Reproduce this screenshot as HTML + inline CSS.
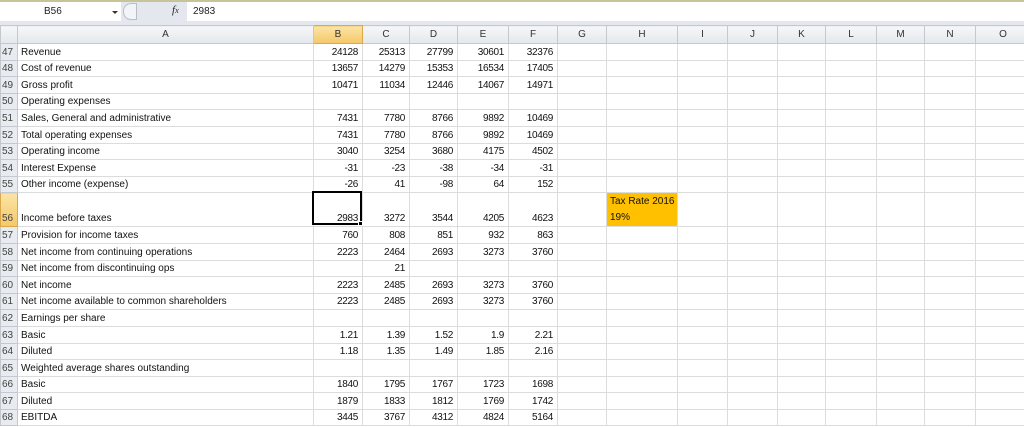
<!DOCTYPE html>
<html><head><meta charset="utf-8"><style>
*{margin:0;padding:0;box-sizing:border-box}
body{width:1024px;height:427px;overflow:hidden;background:#fff;font-family:"Liberation Sans",sans-serif;position:relative}
#fb{position:absolute;left:0;top:0;width:1024px;height:25px;background:#e4e8ee;border-top:2px solid #c8c49a}
#nb{position:absolute;left:0;top:2px;width:121px;height:19px;background:#fff;font-size:10px;line-height:19px;padding-left:44px;color:#222}
#arr{position:absolute;left:112px;top:11px;width:0;height:0;border-left:3px solid transparent;border-right:3px solid transparent;border-top:3px solid #333}
#btn{position:absolute;left:123px;top:3px;width:14px;height:17px;border:1px solid #b8bec8;border-radius:8px 0 0 8px;background:#f2f4f7}
#fx{position:absolute;left:172px;top:4px;font-family:"Liberation Serif",serif;font-style:italic;font-size:11px;color:#222}
#fi{position:absolute;left:187px;top:2px;width:837px;height:19px;background:#fff;font-size:10px;line-height:19px;padding-left:6px;color:#222}
table{position:absolute;left:0;top:25px;border-collapse:collapse;table-layout:fixed;width:1030px}
td{border:1px solid #dadcdd;font-size:10px;color:#111;white-space:nowrap;overflow:hidden;height:16.6px;line-height:14px;padding:0 3px;vertical-align:bottom}
tr.h td{background:linear-gradient(#f6f7f9,#e4e7eb);border-color:#c5c9cf;text-align:center;height:18px;color:#333;font-size:10px;vertical-align:middle}
td.r{background:#e8ebef;border-color:#c5c9cf;color:#444;padding:0 0 0 1px;font-size:10px}
td.n{text-align:right;font-family:"Liberation Sans Narrow","Liberation Sans",sans-serif;letter-spacing:-0.3px;padding-right:4px}
tr.h td.sel,td.r.sel{background:linear-gradient(#fbe4a6,#f5c869);border-color:#d9a94a}
tr.t td{height:32px}
td.tax{background:#ffc000;vertical-align:top;line-height:16px;padding-top:1px}
#selbox{position:absolute;left:312px;top:191px;width:50px;height:34px;border:2px solid #000}
#hdl{position:absolute;left:358px;top:221px;width:5px;height:5px;background:#000;border:1px solid #fff}
</style></head><body>
<div id="fb"></div>
<div id="nb">B56</div><div id="arr"></div><div id="btn"></div>
<div id="fx">f<span style="font-size:8px">x</span></div>
<div id="fi">2983</div>
<table>
<colgroup><col style="width:17px"><col style="width:296px"><col style="width:49px"><col style="width:47px"><col style="width:48px"><col style="width:51px"><col style="width:49px"><col style="width:49px"><col style="width:71px"><col style="width:50px"><col style="width:50px"><col style="width:48px"><col style="width:51px"><col style="width:48px"><col style="width:51px"><col style="width:55px"></colgroup>
<tr class="h"><td></td><td>A</td><td class="sel">B</td><td>C</td><td>D</td><td>E</td><td>F</td><td>G</td><td>H</td><td>I</td><td>J</td><td>K</td><td>L</td><td>M</td><td>N</td><td>O</td></tr>
<tr><td class="r">47</td><td>Revenue</td><td class="n">24128</td><td class="n">25313</td><td class="n">27799</td><td class="n">30601</td><td class="n">32376</td><td></td><td></td><td></td><td></td><td></td><td></td><td></td><td></td><td></td></tr>
<tr><td class="r">48</td><td>Cost of revenue</td><td class="n">13657</td><td class="n">14279</td><td class="n">15353</td><td class="n">16534</td><td class="n">17405</td><td></td><td></td><td></td><td></td><td></td><td></td><td></td><td></td><td></td></tr>
<tr><td class="r">49</td><td>Gross profit</td><td class="n">10471</td><td class="n">11034</td><td class="n">12446</td><td class="n">14067</td><td class="n">14971</td><td></td><td></td><td></td><td></td><td></td><td></td><td></td><td></td><td></td></tr>
<tr><td class="r">50</td><td>Operating expenses</td><td></td><td></td><td></td><td></td><td></td><td></td><td></td><td></td><td></td><td></td><td></td><td></td><td></td><td></td></tr>
<tr><td class="r">51</td><td>Sales, General and administrative</td><td class="n">7431</td><td class="n">7780</td><td class="n">8766</td><td class="n">9892</td><td class="n">10469</td><td></td><td></td><td></td><td></td><td></td><td></td><td></td><td></td><td></td></tr>
<tr><td class="r">52</td><td>Total operating expenses</td><td class="n">7431</td><td class="n">7780</td><td class="n">8766</td><td class="n">9892</td><td class="n">10469</td><td></td><td></td><td></td><td></td><td></td><td></td><td></td><td></td><td></td></tr>
<tr><td class="r">53</td><td>Operating income</td><td class="n">3040</td><td class="n">3254</td><td class="n">3680</td><td class="n">4175</td><td class="n">4502</td><td></td><td></td><td></td><td></td><td></td><td></td><td></td><td></td><td></td></tr>
<tr><td class="r">54</td><td>Interest Expense</td><td class="n">-31</td><td class="n">-23</td><td class="n">-38</td><td class="n">-34</td><td class="n">-31</td><td></td><td></td><td></td><td></td><td></td><td></td><td></td><td></td><td></td></tr>
<tr><td class="r">55</td><td>Other income (expense)</td><td class="n">-26</td><td class="n">41</td><td class="n">-98</td><td class="n">64</td><td class="n">152</td><td></td><td></td><td></td><td></td><td></td><td></td><td></td><td></td><td></td></tr>
<tr class="t"><td class="r sel">56</td><td>Income before taxes</td><td class="n">2983</td><td class="n">3272</td><td class="n">3544</td><td class="n">4205</td><td class="n">4623</td><td></td><td class="tax">Tax Rate 2016<br>19%</td><td></td><td></td><td></td><td></td><td></td><td></td><td></td></tr>
<tr><td class="r">57</td><td>Provision for income taxes</td><td class="n">760</td><td class="n">808</td><td class="n">851</td><td class="n">932</td><td class="n">863</td><td></td><td></td><td></td><td></td><td></td><td></td><td></td><td></td><td></td></tr>
<tr><td class="r">58</td><td>Net income from continuing operations</td><td class="n">2223</td><td class="n">2464</td><td class="n">2693</td><td class="n">3273</td><td class="n">3760</td><td></td><td></td><td></td><td></td><td></td><td></td><td></td><td></td><td></td></tr>
<tr><td class="r">59</td><td>Net income from discontinuing ops</td><td></td><td class="n">21</td><td></td><td></td><td></td><td></td><td></td><td></td><td></td><td></td><td></td><td></td><td></td><td></td></tr>
<tr><td class="r">60</td><td>Net income</td><td class="n">2223</td><td class="n">2485</td><td class="n">2693</td><td class="n">3273</td><td class="n">3760</td><td></td><td></td><td></td><td></td><td></td><td></td><td></td><td></td><td></td></tr>
<tr><td class="r">61</td><td>Net income available to common shareholders</td><td class="n">2223</td><td class="n">2485</td><td class="n">2693</td><td class="n">3273</td><td class="n">3760</td><td></td><td></td><td></td><td></td><td></td><td></td><td></td><td></td><td></td></tr>
<tr><td class="r">62</td><td>Earnings per share</td><td></td><td></td><td></td><td></td><td></td><td></td><td></td><td></td><td></td><td></td><td></td><td></td><td></td><td></td></tr>
<tr><td class="r">63</td><td>Basic</td><td class="n">1.21</td><td class="n">1.39</td><td class="n">1.52</td><td class="n">1.9</td><td class="n">2.21</td><td></td><td></td><td></td><td></td><td></td><td></td><td></td><td></td><td></td></tr>
<tr><td class="r">64</td><td>Diluted</td><td class="n">1.18</td><td class="n">1.35</td><td class="n">1.49</td><td class="n">1.85</td><td class="n">2.16</td><td></td><td></td><td></td><td></td><td></td><td></td><td></td><td></td><td></td></tr>
<tr><td class="r">65</td><td>Weighted average shares outstanding</td><td></td><td></td><td></td><td></td><td></td><td></td><td></td><td></td><td></td><td></td><td></td><td></td><td></td><td></td></tr>
<tr><td class="r">66</td><td>Basic</td><td class="n">1840</td><td class="n">1795</td><td class="n">1767</td><td class="n">1723</td><td class="n">1698</td><td></td><td></td><td></td><td></td><td></td><td></td><td></td><td></td><td></td></tr>
<tr><td class="r">67</td><td>Diluted</td><td class="n">1879</td><td class="n">1833</td><td class="n">1812</td><td class="n">1769</td><td class="n">1742</td><td></td><td></td><td></td><td></td><td></td><td></td><td></td><td></td><td></td></tr>
<tr><td class="r">68</td><td>EBITDA</td><td class="n">3445</td><td class="n">3767</td><td class="n">4312</td><td class="n">4824</td><td class="n">5164</td><td></td><td></td><td></td><td></td><td></td><td></td><td></td><td></td><td></td></tr>
</table>
<div id="selbox"></div><div id="hdl"></div>
</body></html>
